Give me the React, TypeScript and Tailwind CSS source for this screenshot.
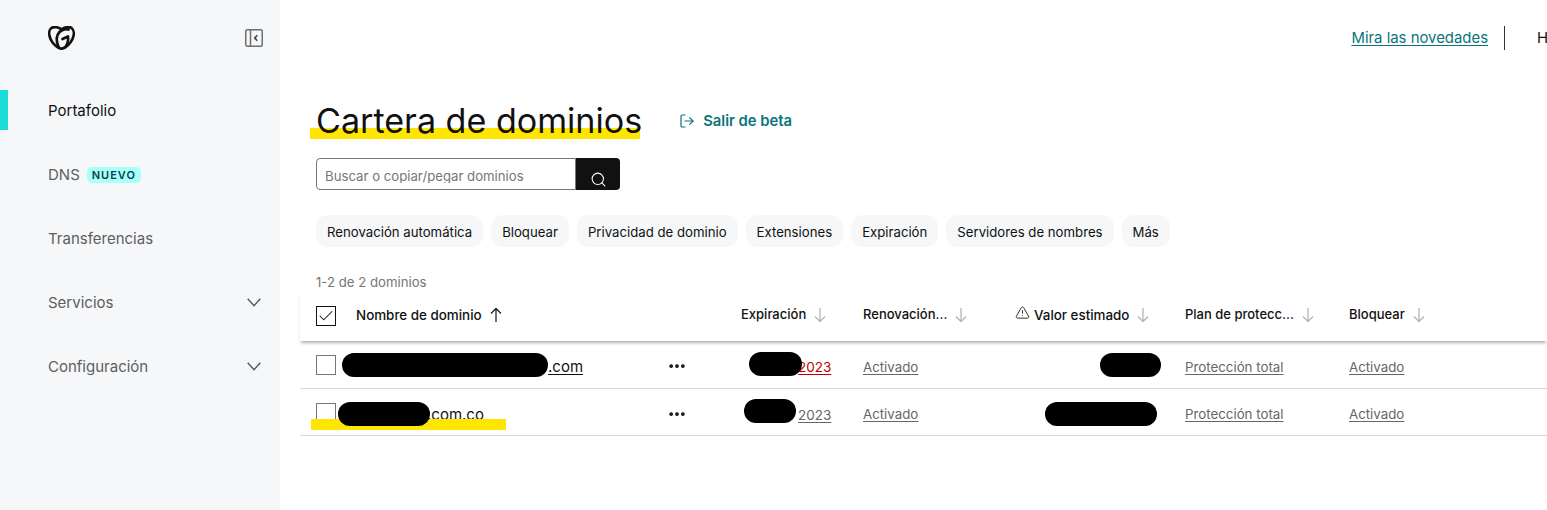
import { Check, LogOut, MoreHorizontal, Search, TriangleAlert } from 'lucide-react';

const filters = [
  'Renovación automática',
  'Bloquear',
  'Privacidad de dominio',
  'Extensiones',
  'Expiración',
  'Servidores de nombres',
  'Más',
];

const navItems = [
  { label: 'Portafolio', active: true },
  { label: 'DNS', badge: 'NUEVO' },
  { label: 'Transferencias' },
  { label: 'Servicios', chevron: true },
  { label: 'Configuración', chevron: true },
];

const rowGrid = 'grid grid-cols-[40px_385px_122px_152px_170px_164px_1fr] items-center pl-4';

function Logo() {
  return (
    <svg className="w-7 h-6" viewBox="0 0 28 24" fill="none" stroke="#111" strokeWidth={2.700} strokeLinecap="round" strokeLinejoin="round">
      <path d="M13.500 3.500C11 1 6 .5 3.500 2 .5 4 .8 9 2.500 13c2 4.500 6.500 9 11 9.800 4.500-.8 9-5.300 11-9.800 1.700-4 2-9-1-11-2.500-1.500-7.500-1-10 1.500z" />
      <path d="M20.500 3.500c-3-1-6.500 0-9 2.500-3 3.200-3.500 9-1 15" />
      <path d="M14.500 13l5.500-2.500c.5 3.500-.5 7.500-2.500 10.500" />
    </svg>
  );
}

function SortArrow({ up }: { up?: boolean }) {
  return (
    <svg
      className={`w-3 h-4 ${up ? 'ml-2 text-[#222]' : 'ml-2 text-[#b5b5b5]'}`}
      viewBox="0 0 12 16"
      fill="none"
      stroke="currentColor"
      strokeWidth={1.300}
    >
      {up ? <path d="M6 15V1.500M1 6.500l5-5 5 5" /> : <path d="M6 1v13.500M1 9.500l5 5 5-5" />}
    </svg>
  );
}

function Sidebar() {
  return (
    <aside className="w-[280px] h-[510px] shrink-0 bg-[#f5f7f8]">
      <div className="flex justify-between items-start pl-[48px] pr-[17px] pt-[26px] h-[90px]">
        <Logo />
        <svg className="w-[18px] h-[18px] mt-[3px]" viewBox="0 0 18 18" fill="none" stroke="#6f6f6f" strokeWidth={1.500}>
          <rect x=".75" y=".75" width="16.500" height="16.500" rx="1.500" />
          <path d="M5.500.75v16.500" />
          <path d="M12.200 6.200L9.800 9l2.400 2.800" strokeWidth={1.700} stroke="#444" />
        </svg>
      </div>
      <nav className="flex flex-col">
        {navItems.map((item) => (
          <div key={item.label} className="relative h-[64px] pl-[48px] pr-[19px] pt-[11px] flex items-start justify-between">
            {item.active && <span className="absolute left-0 top-0 w-2 h-10 bg-[#1bdbdb]" />}
            <div className="flex items-center gap-[7px] h-5">
              <span className={`text-[15px] ${item.active ? 'text-[#111]' : 'text-[#5e5e5e]'}`}>{item.label}</span>
              {item.badge && (
                <span className="h-4 px-[5px] rounded-[5px] bg-[#a9fffa] text-[#09414a] text-[11px] font-semibold tracking-[1px] leading-4">
                  {item.badge}
                </span>
              )}
            </div>
            {item.chevron && (
              <svg className="w-[14px] h-[9px] mt-[5px]" viewBox="0 0 14 9" fill="none" stroke="#555" strokeWidth={1.400}>
                <path d="M.7.7L7 7.800 13.300.7" />
              </svg>
            )}
          </div>
        ))}
      </nav>
    </aside>
  );
}

function SortHead({ label, up, icon, size = 'text-[13px]' }: { label: string; up?: boolean; icon?: boolean; size?: string }) {
  return (
    <div className="flex items-center -mt-1">
      {icon && <TriangleAlert className="w-[15px] h-[15px] mr-[4px] -mt-1 text-[#222]" strokeWidth={1.500} />}
      <span className={`${size} font-medium text-[#111]`}>{label}</span>
      <SortArrow up={up} />
    </div>
  );
}

function Redaction({ className }: { className: string }) {
  return <span className={`absolute h-6 rounded-full bg-black ${className}`} />;
}

function Row({
  tld,
  namePad,
  dateClass,
  blobs,
  height,
  highlight,
}: {
  tld: string;
  namePad: string;
  dateClass: string;
  blobs: string[];
  height: string;
  highlight?: boolean;
}) {
  const link = 'text-[13.300px] text-[#666] underline underline-offset-2';
  return (
    <div className={`relative ${height} pt-[6px] border-b border-[#d6d6d6] ${rowGrid}`}>
      <span className="w-5 h-5 -mt-[5px] border border-[#767676] bg-white" />
      <a className={`${namePad} text-[15px] text-[#111] underline underline-offset-2`}>{tld}</a>
      <a className={`text-[13.500px] underline underline-offset-2 pl-[57px] ${dateClass}`}>2023</a>
      <a className={link}>Activado</a>
      <span />
      <a className={link}>Protección total</a>
      <a className={link}>Activado</a>
      <MoreHorizontal className="absolute left-[367px] top-[15px] w-5 h-5 text-[#111]" strokeWidth={2.500} />
      {highlight && <span className="absolute left-[11px] top-[30px] w-[195px] h-[11px] bg-[#ffe600]" />}
      {blobs.map((b) => (
        <Redaction key={b} className={b} />
      ))}
    </div>
  );
}

export default function App() {
  return (
    <div className="w-[1547px] h-[510px] flex overflow-hidden bg-white font-['Inter',sans-serif]">
      <Sidebar />
      <main className="flex-1 min-w-0 pl-[20px]">
        <header className="flex items-center justify-end h-[76px] text-[14.900px]">
          <a className="text-[#09757a] underline underline-offset-2">Mira las novedades</a>
          <span className="w-px h-6 bg-[#333] mx-4" />
          <span className="w-[10px] ml-[16px] text-[#111] overflow-hidden">H</span>
        </header>

        <div className="pl-4">
          <div className="flex items-center h-[70px] pt-[20px]">
            <h1 className="relative text-[34.100px] leading-[40px] text-[#111]">
              <span className="absolute -left-[6px] bottom-[2px] w-[330px] h-[11px] bg-[#ffe600]" />
              <span className="relative">Cartera de dominios</span>
            </h1>
            <a className="ml-[37px] flex items-center gap-[8px] text-[14.800px] font-semibold text-[#09757a]">
              <LogOut className="w-4 h-4" strokeWidth={1.800} />
              Salir de beta
            </a>
          </div>

          <div className="flex h-8 w-[304px] mt-[12px]">
            <div className="flex-1 flex items-center px-2 rounded-l border border-[#767676] text-[13.200px] text-[#767676]">
              <span className="block h-[14px] mt-[3px] leading-[14px] overflow-hidden">Buscar o copiar/pegar dominios</span>
            </div>
            <div className="w-[44px] bg-[#111] rounded-r flex items-center justify-center">
              <Search className="w-[17px] h-[17px] mt-[11px] text-white" strokeWidth={1.500} />
            </div>
          </div>

          <div className="flex gap-2 mt-[25px]">
            {filters.map((f) => (
              <span key={f} className="h-8 px-[11px] pt-px rounded-[12px] bg-[#f5f7f8] text-[13.200px] leading-8 text-[#111] whitespace-nowrap">
                {f}
              </span>
            ))}
          </div>

          <p className="mt-[25px] text-[13.200px] leading-5 text-[#767676]">1-2 de 2 dominios</p>
        </div>

        <section className="mt-[1px]">
          <div className={`h-[48px] shadow-[0_3px_3px_-1px_rgba(0,0,0,0.3)] ${rowGrid}`}>
            <span className="w-5 h-5 -mt-[2px] border border-[#111] flex items-center justify-center">
              <Check className="w-[18px] h-[18px] text-[#111]" strokeWidth={1.400} />
            </span>
            <SortHead label="Nombre de dominio" up size="text-[13.400px]" />
            <SortHead label="Expiración" />
            <SortHead label="Renovación..." />
            <SortHead label="Valor estimado" icon size="text-[13.400px]" />
            <SortHead label="Plan de protecc..." />
            <SortHead label="Bloquear" />
          </div>
          <Row
            tld=".com"
            namePad="pl-[192px]"
            dateClass="text-[#c00000]"
            height="h-[48px]"
            blobs={['left-[42px] top-[12px] w-[206px]', 'left-[449px] top-[11px] w-[53px]', 'left-[800px] top-[12px] w-[61px]']}
          />
          <Row
            tld=".com.co"
            namePad="pl-[71px]"
            dateClass="text-[#666]"
            height="h-[47px]"
            highlight
            blobs={['left-[38px] top-[13px] w-[92px]', 'left-[444px] top-[10px] w-[52px]', 'left-[745px] top-[13px] w-[112px]']}
          />
        </section>
      </main>
    </div>
  );
}
